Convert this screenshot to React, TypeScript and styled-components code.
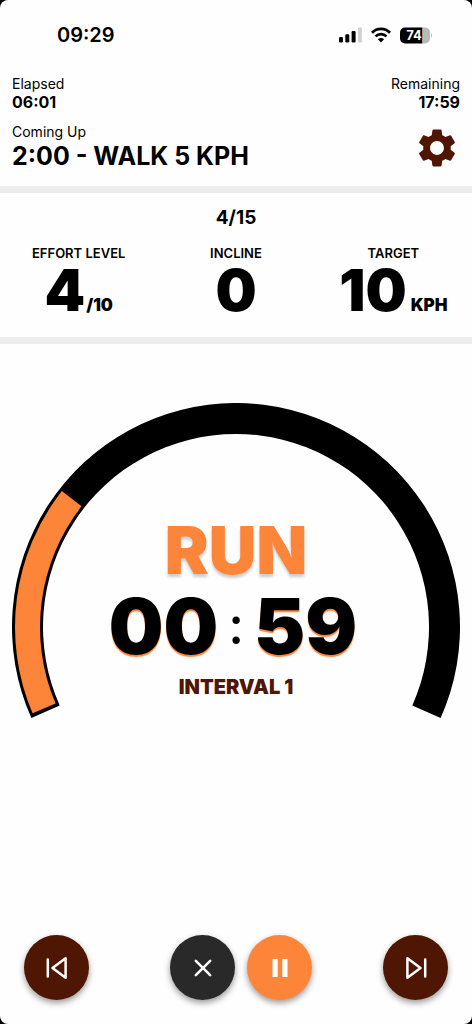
import React from "react";
import styled, { createGlobalStyle } from "styled-components";
import { MdSettings } from "react-icons/md";

const BROWN = "#4f1604";
const ORANGE = "#fd8539";

const GlobalStyle = createGlobalStyle`
  * { box-sizing: border-box; }
  body {
    margin: 0;
    background: #000;
    color: #000;
    font-family: Inter, "Liberation Sans", sans-serif;
  }
`;

const Page = styled.main`
  display: flex;
  flex-direction: column;
  min-height: 100vh;
  background: #fefefe;
  border-radius: 8px;
`;

const StatusBar = styled.div`
  display: flex;
  justify-content: space-between;
  align-items: center;
  height: 70px;
  padding: 0 40px 0 57px;
`;

const Clock = styled.time`
  font-size: 20px;
  line-height: 24px;
  font-weight: 600;
`;

const Indicators = styled.div`
  display: flex;
  align-items: center;
  gap: 9px;
`;

const Header = styled.header`
  display: flex;
  flex-direction: column;
  gap: 12px;
  padding: 6px 12px 14px;
`;

const HeaderRow = styled.div`
  display: flex;
  justify-content: space-between;
  align-items: center;
`;

const Field = styled.div<{ $align?: "left" | "right" }>`
  text-align: ${(p) => p.$align ?? "left"};
`;

const FieldLabel = styled.div`
  font-size: 14px;
  line-height: 16px;
`;

const FieldValue = styled.div<{ $large?: boolean }>`
  font-size: ${(p) => (p.$large ? 25 : 16)}px;
  line-height: ${(p) => (p.$large ? 32 : 20)}px;
  font-weight: 700;
`;

const SettingsButton = styled.button`
  display: flex;
  padding: 0;
  border: 0;
  background: none;
  color: ${BROWN};
  cursor: pointer;
`;

const Stats = styled.section`
  border-top: 7px solid #ededed;
  border-bottom: 7px solid #ededed;
  padding: 13px 0 17px;
`;

const Step = styled.div`
  font-size: 19px;
  line-height: 24px;
  font-weight: 700;
  text-align: center;
`;

const StatGrid = styled.div`
  display: grid;
  grid-template-columns: repeat(3, 1fr);
  padding-top: 15px;
`;

const Stat = styled.div`
  text-align: center;
`;

const StatLabel = styled.div`
  font-size: 13px;
  line-height: 16px;
  font-weight: 600;
`;

const StatValue = styled.div`
  display: flex;
  justify-content: center;
  align-items: baseline;
  font-size: 58px;
  line-height: 59px;
  font-weight: 900;
  white-space: nowrap;
`;

const StatUnit = styled.span<{ $spaced?: boolean }>`
  margin-left: ${(p) => (p.$spaced ? 4 : 1)}px;
  font-size: 17px;
  line-height: 20px;
  font-weight: 900;
`;

const Gauge = styled.section`
  display: grid;
  padding: 59px 12px 0;
  & > * { grid-area: 1 / 1; }
`;

const Dial = styled.svg`
  display: block;
  width: 100%;
`;

const Readout = styled.div`
  display: flex;
  flex-direction: column;
  align-items: center;
  padding-top: 114px;
  text-align: center;
`;

const Phase = styled.h1`
  margin: 0;
  color: ${ORANGE};
  font-size: 66px;
  line-height: 66px;
  font-weight: 900;
  text-shadow: 0 3px 3px rgba(0, 0, 0, 0.2);
`;

const Countdown = styled.div`
  display: flex;
  align-items: center;
  gap: 10px;
  padding-right: 6px;
  font-size: 77px;
  line-height: 86px;
  font-weight: 900;
  text-shadow: 0 2px 1px ${ORANGE};
`;

const Colon = styled.span`
  font-size: 52px;
  font-weight: 500;
  text-shadow: none;
`;

const IntervalName = styled.div`
  color: ${BROWN};
  font-size: 20px;
  line-height: 36px;
  font-weight: 900;
`;

const Controls = styled.nav`
  display: flex;
  justify-content: space-between;
  margin-top: auto;
  padding: 24px;
`;

const MainControls = styled.div`
  display: flex;
  gap: 12px;
  margin-left: 10px;
`;

const RoundButton = styled.button<{ $color: string }>`
  display: grid;
  place-items: center;
  width: 65px;
  height: 65px;
  padding: 0;
  border: 0;
  border-radius: 50%;
  background: ${(p) => p.$color};
  color: #fff;
  box-shadow: 0 3px 6px rgba(0, 0, 0, 0.4);
  cursor: pointer;
`;

const CENTER = 224;

function point(radius: number, degrees: number) {
  const a = (degrees * Math.PI) / 180;
  return `${(CENTER + radius * Math.cos(a)).toFixed(2)} ${(CENTER + radius * Math.sin(a)).toFixed(2)}`;
}

function band(outer: number, inner: number, from: number, to: number) {
  const large = to - from > 180 ? 1 : 0;
  return `M${point(outer, from)} A${outer} ${outer} 0 ${large} 1 ${point(outer, to)} L${point(inner, to)} A${inner} ${inner} 0 ${large} 0 ${point(inner, from)}Z`;
}

const Signal = () => (
  <svg width="23" height="16" viewBox="0 0 23 16" aria-label="Signal">
    <rect x="0" y="10" width="4" height="5.5" rx="1.2" />
    <rect x="6.3" y="7.2" width="4" height="8.3" rx="1.2" />
    <rect x="12.6" y="4" width="4" height="11.5" rx="1.2" />
    <rect x="18.9" y="0.5" width="4" height="15" rx="1.2" fill="#d2d2d2" />
  </svg>
);

const Wifi = () => (
  <svg width="20" height="16" viewBox="0 0 20 16" fill="none" stroke="#000" strokeWidth="2.7" aria-label="Wi-Fi">
    <path d="M1 5.8C6 .6 14 .6 19 5.8" />
    <path d="M4.5 9.4c3.1-3 7.9-3 11 0" />
    <path d="M10 15.5 6.9 12.3c1.7-1.6 4.5-1.6 6.2 0Z" fill="#000" stroke="none" />
  </svg>
);

const Battery = () => (
  <svg width="32" height="17" viewBox="0 0 32 17" aria-label="Battery">
    <path d="M5 .5h17.5v16H5a5 5 0 0 1-5-5v-6a5 5 0 0 1 5-5Z" />
    <path d="M22.5 .5H25a5 5 0 0 1 5 5v6a5 5 0 0 1-5 5h-2.5ZM31 6q2 2.5 0 5Z" fill="#b9b9b9" />
    <text x="14" y="13" textAnchor="middle" fill="#fff" fontSize="13" fontWeight="700">74</text>
  </svg>
);

const SkipIcon = ({ forward }: { forward?: boolean }) => (
  <svg width="24" height="24" viewBox="0 0 24 24" fill="none" stroke="currentColor" strokeWidth="2.5" strokeLinejoin="round" strokeLinecap="round">
    {forward ? (
      <path d="M3.4 2.2v19.6L16.5 12ZM21.2 3.4v17.2" />
    ) : (
      <path d="M20.6 2.2v19.6L7.5 12ZM2.8 3.4v17.2" />
    )}
  </svg>
);

export default function App() {
  return (
    <>
      <GlobalStyle />
      <Page>
        <StatusBar>
          <Clock>09:29</Clock>
          <Indicators>
            <Signal />
            <Wifi />
            <Battery />
          </Indicators>
        </StatusBar>

        <Header>
          <HeaderRow>
            <Field>
              <FieldLabel>Elapsed</FieldLabel>
              <FieldValue>06:01</FieldValue>
            </Field>
            <Field $align="right">
              <FieldLabel>Remaining</FieldLabel>
              <FieldValue>17:59</FieldValue>
            </Field>
          </HeaderRow>
          <HeaderRow>
            <Field>
              <FieldLabel>Coming Up</FieldLabel>
              <FieldValue $large>2:00 - WALK 5 KPH</FieldValue>
            </Field>
            <SettingsButton type="button" aria-label="Settings">
              <MdSettings size={46} />
            </SettingsButton>
          </HeaderRow>
        </Header>

        <Stats>
          <Step>4/15</Step>
          <StatGrid>
            <Stat>
              <StatLabel>EFFORT LEVEL</StatLabel>
              <StatValue>4<StatUnit>/10</StatUnit></StatValue>
            </Stat>
            <Stat>
              <StatLabel>INCLINE</StatLabel>
              <StatValue>0</StatValue>
            </Stat>
            <Stat>
              <StatLabel>TARGET</StatLabel>
              <StatValue>10<StatUnit $spaced>KPH</StatUnit></StatValue>
            </Stat>
          </StatGrid>
        </Stats>

        <Gauge>
          <Dial viewBox="0 0 448 316" aria-hidden="true">
            <path d={band(224, 193, 156, 384)} />
            <path d={band(221, 196, 157, 218)} fill={ORANGE} />
          </Dial>
          <Readout>
            <Phase>RUN</Phase>
            <Countdown>
              <span>00</span>
              <Colon>:</Colon>
              <span>59</span>
            </Countdown>
            <IntervalName>INTERVAL 1</IntervalName>
          </Readout>
        </Gauge>

        <Controls>
          <RoundButton type="button" $color={BROWN} aria-label="Previous interval">
            <SkipIcon />
          </RoundButton>
          <MainControls>
            <RoundButton type="button" $color="#292929" aria-label="Stop workout">
              <svg width="24" height="24" viewBox="0 0 24 24" stroke="currentColor" strokeWidth="2.5" strokeLinecap="round">
                <path d="M4.8 4.8 19.2 19.2M19.2 4.8 4.8 19.2" />
              </svg>
            </RoundButton>
            <RoundButton type="button" $color={ORANGE} aria-label="Pause workout">
              <svg width="24" height="24" viewBox="0 0 24 24" fill="currentColor">
                <path d="M4.5 3h5.2v18H4.5ZM14.3 3h5.2v18h-5.2Z" />
              </svg>
            </RoundButton>
          </MainControls>
          <RoundButton type="button" $color={BROWN} aria-label="Next interval">
            <SkipIcon forward />
          </RoundButton>
        </Controls>
      </Page>
    </>
  );
}
